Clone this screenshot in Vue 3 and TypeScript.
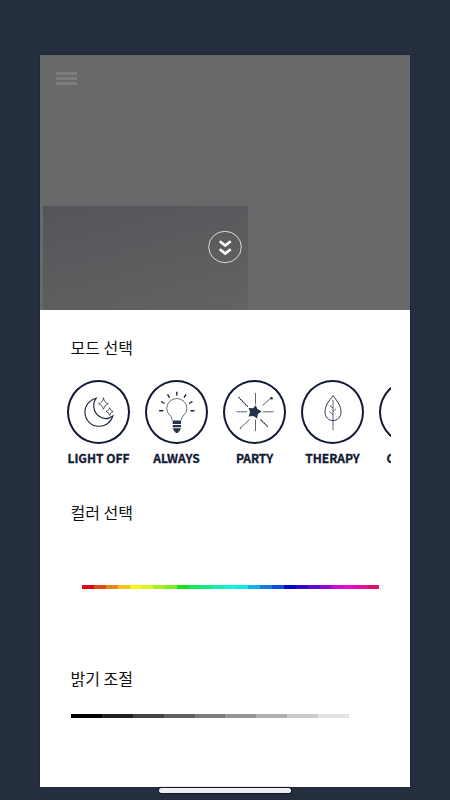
<script setup lang="ts">
import { ref } from 'vue'

interface Mode { id: string; label: string }

const modes: Mode[] = [
  { id: 'off', label: 'LIGHT OFF' },
  { id: 'always', label: 'ALWAYS' },
  { id: 'party', label: 'PARTY' },
  { id: 'therapy', label: 'THERAPY' },
  { id: 'color', label: 'COLORS' },
]
const selected = ref<string>('')

const hues: string[] = [
  '#dc0b12', '#df4a10', '#e48618', '#f3c51e', '#fbf614', '#e0f51c', '#a4ee1c', '#80ec20',
  '#12e51c', '#12e95c', '#14eb86', '#14efaf', '#18efdd', '#12e6ea', '#10b4e9', '#0f80dc', '#0d4fd8',
  '#0705c9', '#3208cd', '#5c0cd2', '#8e0bd5', '#c80cdc', '#e30bd4', '#e20da4', '#df0f6c',
]
const grays: string[] = ['#000000', '#202020', '#434343', '#5f5f5f', '#7c7c7c', '#969696', '#b0b0b0', '#cacaca', '#e4e4e4']
</script>

<template>
  <div class="screen">
    <main class="card">
      <header class="preview">
        <button class="menu" aria-label="Menu"><i /><i /><i /></button>
        <div class="thumb">
          <button class="collapse" aria-label="Collapse">
            <svg width="34" height="34" viewBox="0 0 34 34">
              <ellipse cx="17" cy="17" rx="16.3" ry="15.7" />
              <path d="M11.7 11.2 17.2 15.6 22.7 11.2M11.7 19.2 17.2 23.6 22.7 19.2" />
            </svg>
          </button>
        </div>
      </header>

      <section class="modes">
        <h2>모드 선택</h2>
        <div class="scroller">
          <button v-for="m in modes" :key="m.id" class="mode" @click="selected = m.id">
            <span class="ring">
              <svg viewBox="0.5 0 59 60" width="59" height="60">
                <g v-if="m.id === 'off'" class="line">
                  <path d="M27.8 16.2A14.2 14.2 0 1 0 44.3 34C40 37.2 34.8 37.3 30.6 34.3 24.8 30.2 23.5 22 27.8 16.2Z" />
                  <path class="fine" d="M35 15.8Q35.6 20.8 39.8 21.7 35.6 22.8 35 27.3 34.2 22.8 30 21.7 34.2 20.8 35 15.8ZM41.2 25.7Q41.7 28.9 44.7 29.5 41.7 30.2 41.2 33.5 40.6 30.2 37.5 29.5 40.6 28.9 41.2 25.7Z" />
                </g>
                <g v-else-if="m.id === 'always'" class="line">
                  <path class="ray" d="M30.3 9.8V13.6M21 12.3 23.1 15.6M39.5 12.3 37.5 15.6M14.6 19.5 18 21.5M46 19.5 42.5 21.5M12.6 28.8H16.7M44 28.8H48" />
                  <path class="bulb" d="M25.8 38.4C25.7 33 20.2 32.4 20.2 26.6A10.1 10.1 0 0 1 40.4 26.6C40.4 32.4 34.9 33 34.7 38.4" />
                  <path class="solid" d="M26.2 38.5H34.5V42H26.2ZM26.2 43H34.5V45.2H26.2ZM26.2 46.3H34.5L32.8 49.5H32.2L31.4 51H29.3L28.5 49.5H27.8Z" />
                </g>
                <g v-else-if="m.id === 'party'" class="line">
                  <path class="thin" d="M31 11V22.5M31 37.7V49M12 29.8H22.5M38.3 29.8H49" />
                  <path class="dash" d="M14 15.2 23.3 24.7M36 37.5 43.3 44.8" />
                  <path class="thin" d="M38 23.6 46.5 16M25.3 37.4 16.3 45.7" />
                  <circle class="solid" cx="47" cy="16.2" r="1.3" /><circle class="solid" cx="16" cy="46" r=".7" />
                  <path class="star" d="M31.3 23.2 32.9 27 37.2 29.4 33.4 32 32.6 36.4 28.9 33.9 24.1 34.4 25.6 30 24 25.9 28.6 26.3Z" />
                </g>
                <g v-else-if="m.id === 'therapy'" class="line">
                  <path class="leaf" d="M30.5 13.6C27.2 18.2 22.5 23.2 22.5 29.8 22.5 35.1 26.2 38.6 30.5 38.6 34.9 38.6 38.5 35.1 38.5 29.8 38.5 23.2 33.9 18.2 30.5 13.6Z" />
                  <path class="thin" d="M30.5 18V48.3M30.5 26.2 27.5 23.7M30.5 32.8 26.8 29.3M30.5 29.5 33.6 26.6" />
                </g>
              </svg>
            </span>
            <span class="label">{{ m.label }}</span>
          </button>
        </div>
      </section>

      <section class="color">
        <h2>컬러 선택</h2>
        <div class="bar hue"><i v-for="c in hues" :key="c" :style="{ background: c }" /></div>
      </section>

      <section class="brightness">
        <h2>밝기 조절</h2>
        <div class="bar gray"><i v-for="c in grays" :key="c" :style="{ background: c }" /></div>
      </section>
    </main>
    <div class="home" />
  </div>
</template>

<style>
body { margin: 0; background: #252e3e; }
</style>

<style scoped>
.screen { box-sizing: border-box; width: 450px; height: 800px; padding-top: 55px; background: #252e3e; overflow: hidden; display: flex; flex-direction: column; align-items: center; font-family: "Noto Sans CJK KR", sans-serif; }
.card { width: 370px; height: 732px; background: #fff; box-shadow: 0 0 1px #050c20; display: flex; flex-direction: column; flex: none; }
button { border: 0; padding: 0; margin: 0; background: none; font-family: inherit; }
.preview { height: 255px; background: #68696a; display: flex; flex-direction: column; justify-content: space-between; align-items: flex-start; flex: none; }
.menu { display: flex; flex-direction: column; gap: 2.5px; margin: 17px 0 0 16px; width: 21px; }
.menu i { height: 2.7px; background: #7c7d7e; }
.thumb { box-sizing: border-box; width: 205px; height: 104px; margin-left: 3px; padding: 24px 6px 0 0; display: flex; justify-content: flex-end; align-items: flex-start; background: linear-gradient(165deg, #545558, #5b5c5e 50%, #626364); }
.collapse { height: 34px; }
.collapse svg { display: block; fill: none; stroke: #fff; }
.collapse ellipse { stroke-width: .9; stroke: #e6e6e6; }
.collapse path { stroke-width: 2.7; }
h2 { margin: 0 0 0 30.5px; font-size: 16px; line-height: 24px; font-weight: 400; color: #111; }
.modes, .color { box-sizing: border-box; }
.modes { padding-top: 25px; height: 165px; }
.scroller { display: flex; gap: 15px; margin: 21px 19px 0 27px; overflow: hidden; }
.mode { width: 63px; flex: none; display: flex; flex-direction: column; align-items: center; color: #111a34; }
.ring { box-sizing: border-box; width: 63px; height: 64px; border: 2px solid #111a34; border-radius: 50%; display: block; }
.ring svg { display: block; }
.label { margin-top: 5px; font-size: 12px; line-height: 18px; font-weight: 700; white-space: nowrap; -webkit-text-stroke: .3px #111a34; }
.line { fill: none; stroke: #18223a; stroke-width: 1.1; }
.fine { stroke-width: .7; }
.ray { stroke-width: 1.4; }
.bulb { stroke-width: .65; }
.thin { stroke-width: .7; }
.dash { stroke-width: 1.1; stroke-dasharray: 1.8 .5; }
.leaf { stroke-width: .9; }
.solid, .star { fill: #26324a; stroke: none; }
.color { padding-top: 25px; height: 165px; }
.brightness { padding-top: 26px; }
.bar { display: flex; height: 4px; }
.bar i { flex: 1; }
.hue { width: 297px; margin: 61px 0 0 42px; }
.gray { width: 278px; margin: 24px 0 0 31px; }
.home { width: 132px; height: 5px; margin-top: 1px; border-radius: 3px; background: #f0f0f2; box-shadow: 0 0 1px 1px #101a2c; flex: none; }
</style>
